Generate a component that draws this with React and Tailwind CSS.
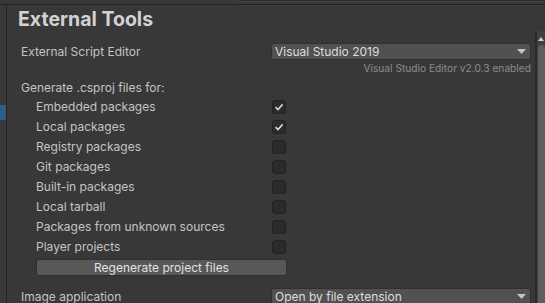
import React from 'react'

const font = { fontFamily: 'Inter, "Noto Sans", sans-serif' }

const packages = [
  { label: 'Embedded packages', checked: true },
  { label: 'Local packages', checked: true },
  { label: 'Registry packages', checked: false },
  { label: 'Git packages', checked: false },
  { label: 'Built-in packages', checked: false },
  { label: 'Local tarball', checked: false },
  { label: 'Packages from unknown sources', checked: false },
  { label: 'Player projects', checked: false },
]

function Caret() {
  return (
    <svg width="9" height="5" viewBox="0 0 9 5" className="shrink-0">
      <path d="M0 0 H9 L4.5 5 Z" fill="#c4c4c4" />
    </svg>
  )
}

function Dropdown({ value }) {
  return (
    <div className="flex h-[17px] w-[260px] items-center justify-between rounded-[3px] border border-[#303030] bg-[#515151] pl-[3px] pr-[4px] text-[12px] text-[#dedede]">
      <span className="leading-none">{value}</span>
      <Caret />
    </div>
  )
}

function Checkbox({ checked }) {
  return (
    <div className="flex h-[14px] w-[14px] items-center justify-center rounded-[3px] border border-[#212121] bg-[#2b2b2b]">
      {checked && (
        <svg width="10" height="10" viewBox="0 0 10 10">
          <path d="M1.5 5.2 L4 7.6 L8.6 2.4" fill="none" stroke="#d4d4d4" strokeWidth="1.6" />
        </svg>
      )}
    </div>
  )
}

export default function App() {
  return (
    <div className="flex h-[303px] w-[545px] flex-col overflow-hidden bg-[#383838]" style={font}>
      {/* top strip */}
      <div className="flex h-[4px] shrink-0">
        <div className="w-[239px]" />
        <div className="h-[2px] flex-1 rounded-bl-[3px] border-b border-l border-[#464646] bg-[#2c2c2c]" />
      </div>
      <div className="h-px shrink-0 bg-[#232323]" />

      <div className="flex flex-1">
        {/* sidebar */}
        <div className="w-[7px] shrink-0 border-r border-[#232323] pt-[100px]">
          <div className="h-[15px] bg-[#2c5d87]" />
        </div>

        {/* content */}
        <div className="w-[528px] shrink-0 pl-[11px] text-[12px] text-[#c4c4c4]">
          <div className="mt-[2px] h-[24px] text-[19.5px] font-bold leading-[24px] text-[#d2d2d2]">External Tools</div>

          <div className="mt-[12px] flex h-[17px] items-center pl-[3px]">
            <div className="w-[250px]">External Script Editor</div>
            <Dropdown value="Visual Studio 2019" />
          </div>
          <div className="flex h-[18px] w-[513px] items-center justify-end text-[10.2px] text-[#8c8c8c]">
            Visual Studio Editor v2.0.3 enabled
          </div>
          <div className="flex h-[19px] items-center pl-[3px]">Generate .csproj files for:</div>

          {packages.map((p) => (
            <div key={p.label} className="flex h-[20px] items-center pl-[18px]">
              <div className="w-[236px]">{p.label}</div>
              <Checkbox checked={p.checked} />
            </div>
          ))}

          <div className="ml-[18px] mt-[2px] flex h-[17px] w-[251px] items-center justify-center rounded-[3px] border border-[#303030] bg-[#585858] text-[12px] text-[#e2e2e2]">
            Regenerate project files
          </div>

          <div className="mt-[12px] flex h-[17px] items-center pl-[3px]">
            <div className="w-[250px]">Image application</div>
            <Dropdown value="Open by file extension" />
          </div>
        </div>

        {/* scrollbar */}
        <div className="flex flex-1 flex-col pt-[26px]">
          <div className="flex flex-1 flex-col border-l-2 border-[#2b2b2b] bg-[#404040]">
            <div className="flex h-[14px] items-center justify-center pt-[2px]">
              <svg width="6" height="4" viewBox="0 0 6 4">
                <path d="M0 4 L3 0 L6 4 Z" fill="#cfcfcf" />
              </svg>
            </div>
            <div className="ml-[1px] flex-1 rounded-t-[4px] bg-[#5e5e5e]" />
          </div>
        </div>
      </div>
    </div>
  )
}
